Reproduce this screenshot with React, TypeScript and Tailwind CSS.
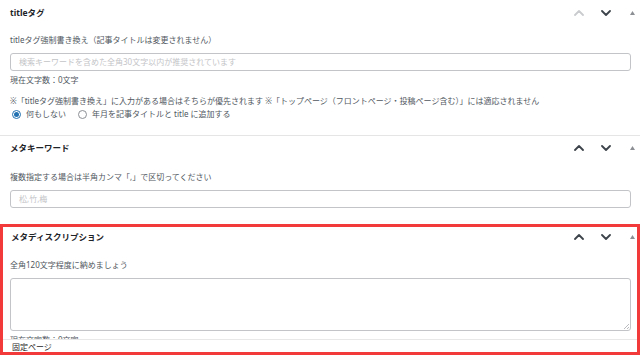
import React from 'react';

type Box = { title: string; upDisabled?: boolean };

function Chevron({ dir, disabled }: { dir: 'up' | 'down'; disabled?: boolean }) {
  const d = dir === 'up' ? 'M1 6 L5 2 L9 6' : 'M1 2 L5 6 L9 2';
  return (
    <svg width="10" height="8" viewBox="0 0 10 8" className={disabled ? 'text-[#c9cbce]' : 'text-[#3c434a]'}>
      <path d={d} fill="none" stroke="currentColor" strokeWidth="1.8" strokeLinecap="round" strokeLinejoin="round" />
    </svg>
  );
}

function BoxHeader({ title, upDisabled, cls }: Box & { cls: string }) {
  return (
    <div className={`flex items-center justify-between ${cls}`}>
      <h2 className="text-[8.5px] font-bold text-[#1d2327] leading-none">{title}</h2>
      <div className="flex items-center">
        <Chevron dir="up" disabled={upDisabled} />
        <span className="ml-[17px]">
          <Chevron dir="down" />
        </span>
        {/* toggle arrow */}
        <svg width="5" height="4" viewBox="0 0 5 4" className="ml-[19px] text-[#8c8f94]">
          <path d="M0 4 L2.5 0 L5 4 Z" fill="currentColor" />
        </svg>
      </div>
    </div>
  );
}

function Radio({ checked, label }: { checked?: boolean; label: string }) {
  return (
    <label className="inline-flex items-center gap-[5px]">
      <span
        className={`w-[9px] h-[9px] rounded-full border flex items-center justify-center ${
          checked ? 'border-[#2271b1]' : 'border-[#8c8f94]'
        }`}
      >
        {checked && <span className="w-[5px] h-[5px] rounded-full bg-[#2271b1]" />}
      </span>
      <span>{label}</span>
    </label>
  );
}

export default function App() {
  return (
    <div className="w-[640px] h-[355px] overflow-hidden bg-white text-[#50575e] font-['Noto_Sans','Noto_Sans_CJK_JP',sans-serif]">
      {/* titleタグ */}
      <section className="border-b border-[#e5e5e5] pb-[15px]">
        <BoxHeader title="titleタグ" upDisabled cls="h-[26px] pl-[10px] pr-[5px]" />
        <div className="px-[10px] text-[8px] leading-[12px]">
          <p className="mt-[8px]">titleタグ強制書き換え（記事タイトルは変更されません）</p>
          <div className="mt-[7px] mr-[-1px] h-[18px] rounded-[3px] border border-[#c3c4c7] flex items-center px-[8px] text-[#c3c4c7]">
            検索キーワードを含めた全角30文字以内が推奨されています
          </div>
          <p className="mt-[3px]">現在文字数：0文字</p>
          <p className="mt-[9px]">
            ※「titleタグ強制書き換え」に入力がある場合はそちらが優先されます ※「トップページ（フロントページ・投稿ページ含む）」には適応されません
          </p>
          <div className="mt-[1px] flex items-center gap-[12px] pl-[2px]">
            <Radio checked label="何もしない" />
            <Radio label="年月を記事タイトルと title に追加する" />
          </div>
        </div>
      </section>

      {/* メタキーワード */}
      <section className="pb-[16px]">
        <BoxHeader title="メタキーワード" cls="h-[24px] pl-[10px] pr-[5px]" />
        <div className="px-[10px] text-[8px] leading-[12px]">
          <p className="mt-[11px]">複数指定する場合は半角カンマ「,」で区切ってください</p>
          <div className="mt-[7px] mr-[-1px] h-[18px] rounded-[3px] border border-[#c3c4c7] flex items-center px-[8px] text-[#c3c4c7]">
            松,竹,梅
          </div>
        </div>
      </section>

      {/* メタディスクリプション */}
      <section className="relative h-[131px] border-[3px] border-[#f23a3a] overflow-hidden">
        <BoxHeader title="メタディスクリプション" cls="h-[20px] pl-[8px] pr-[2px]" />
        <div className="pl-[7px] pr-[6px] text-[8px] leading-[12px]">
          <p className="mt-[12px]">全角120文字程度に納めましょう</p>
          <div className="relative mt-[7px] h-[53px] rounded-[3px] border border-[#c3c4c7]">
            <svg width="6" height="6" viewBox="0 0 6 6" className="absolute right-[1px] bottom-[1px] text-[#a7aaad]">
              <path d="M6 1 L1 6 M6 4 L4 6" stroke="currentColor" strokeWidth="0.8" />
            </svg>
          </div>
          <p className="mt-[3px]">現在文字数：0文字</p>
        </div>
        <div className="absolute left-0 right-0 bottom-0 h-[13px] bg-white border-t border-[#e8e8e8] pl-[9px] text-[8px] leading-[13px] text-[#1e1e1e]">
          固定ページ
        </div>
      </section>
    </div>
  );
}
